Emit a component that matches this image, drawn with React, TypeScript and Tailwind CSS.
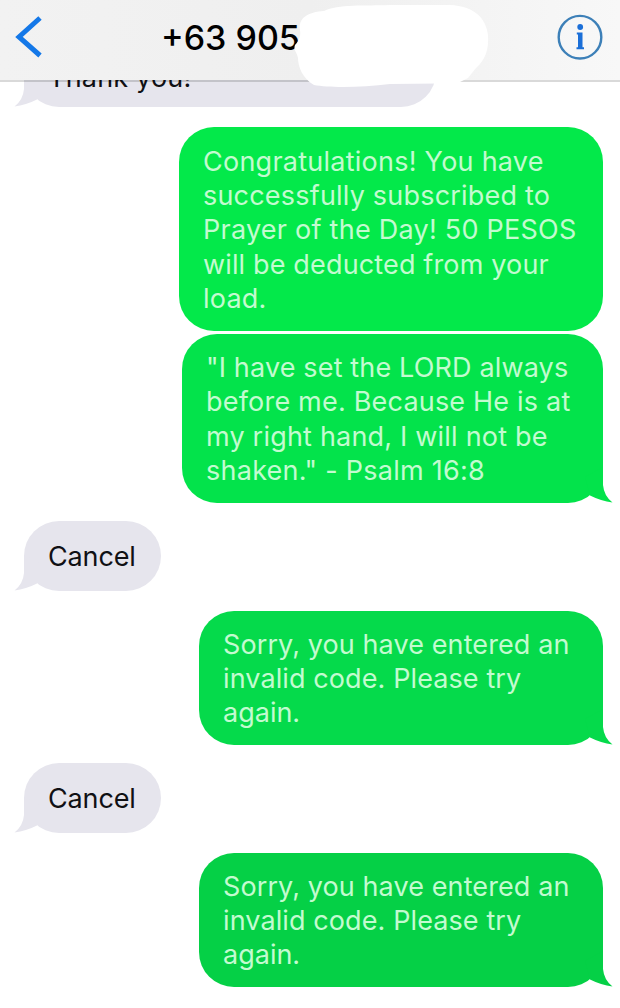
import React from 'react';
import { cx } from 'class-variance-authority';

type Message = {
  side: 'in' | 'out';
  // outer spacing and size of the bubble
  box: string;
  color: string;
  tail: boolean;
  lines: { text: string; tracking: number }[];
};

const messages: Message[] = [
  {
    side: 'in',
    box: '-mt-[46px] ml-6 w-[412px] h-[71px] pl-6 pt-[13px]',
    color: '#e6e5ed',
    tail: true,
    lines: [{ text: 'Thank you!', tracking: 0.2 }],
  },
  {
    side: 'out',
    box: 'mt-5 w-[424px] h-[204px] pl-6 pt-[3px]',
    color: '#03e94a',
    tail: false,
    lines: [
      { text: 'Congratulations! You have', tracking: 0.25 },
      { text: 'successfully subscribed to', tracking: 0.2 },
      { text: 'Prayer of the Day! 50 PESOS', tracking: 0.25 },
      { text: 'will be deducted from your', tracking: 0.15 },
      { text: 'load.', tracking: 0.2 },
    ],
  },
  {
    side: 'out',
    box: 'mt-[3px] w-[421px] h-[169px] pl-6 pt-[2px]',
    color: '#03e34b',
    tail: true,
    lines: [
      { text: '"I have set the LORD always', tracking: 0.15 },
      { text: 'before me. Because He is at', tracking: 0.2 },
      { text: 'my right hand, I will not be', tracking: 0.2 },
      { text: 'shaken." - Psalm 16:8', tracking: 0.25 },
    ],
  },
  {
    side: 'in',
    box: 'mt-[18px] ml-6 w-[137px] h-[70px] pl-6 pt-[3px]',
    color: '#e6e5ed',
    tail: true,
    lines: [{ text: 'Cancel', tracking: -0.15 }],
  },
  {
    side: 'out',
    box: 'mt-5 w-[404px] h-[134px] pl-6 pt-[2px]',
    color: '#05da4b',
    tail: true,
    lines: [
      { text: 'Sorry, you have entered an', tracking: 0.1 },
      { text: 'invalid code. Please try', tracking: 0.1 },
      { text: 'again.', tracking: 0 },
    ],
  },
  {
    side: 'in',
    box: 'mt-[18px] ml-6 w-[137px] h-[70px] pl-6 pt-[3px]',
    color: '#e6e5ed',
    tail: true,
    lines: [{ text: 'Cancel', tracking: -0.15 }],
  },
  {
    side: 'out',
    box: 'mt-5 w-[404px] h-[134px] pl-6 pt-[2px]',
    color: '#05d046',
    tail: true,
    lines: [
      { text: 'Sorry, you have entered an', tracking: 0.1 },
      { text: 'invalid code. Please try', tracking: 0.1 },
      { text: 'again.', tracking: 0 },
    ],
  },
];

export default function App() {
  return (
    <div className="w-[620px] h-[1008px] overflow-hidden bg-white font-['Inter','Liberation_Sans',sans-serif]">
      <Header />
      <main className="flex flex-col pr-[17px]">
        {messages.map((message, i) => (
          <Bubble key={i} message={message} />
        ))}
      </main>
    </div>
  );
}

function Header() {
  return (
    <header className="relative z-10 flex items-center h-[82px] pb-[6px] border-b-2 border-black/15 bg-clip-padding bg-gradient-to-r from-[#f2f2f2] via-[#efefef] to-[#f8f8f8]">
      <svg className="ml-[14px] w-[30px] h-[44px]" viewBox="0 0 30 44" fill="none">
        <path d="M26 3 L5 22 L26 40.500" stroke="#1478e8" strokeWidth="5" />
      </svg>
      <h1 className="ml-[117px] pt-[2px] text-[34px] leading-none font-medium text-black whitespace-nowrap">+63 905</h1>
      <svg className="ml-auto mr-[17px] w-[46px] h-[46px]" viewBox="0 0 46 46" fill="none">
        <circle cx="23" cy="23.200" r="21.3" stroke="#3d80b8" strokeWidth="2.4" />
        <circle cx="23.2" cy="13" r="2.9" fill="#1b6fd8" />
        <path d="M19.8 18.500h5.700V33.300h1.500v2h-7.500v-2h1.500V20.500h-1.200z" fill="#1b6fd8" />
      </svg>
      {/* blanked out part of the number */}
      <svg className="absolute left-[290px] top-0 w-[210px] h-[90px]" viewBox="0 0 210 90">
        <path
          d="M10 30 C8 18 18 12 34 11 C48 4 75 6 100 5 L160 5 C184 6 196 18 198 35 C199 50 195 60 186 68 L178 78 L168 83 L148 83.500 L100 84 C72 87.500 40 88 24 85 C12 78 8 66 8 58 C7 52 3 50 5 45 C9 41 11 36 10 30 Z"
          fill="#fff"
        />
      </svg>
    </header>
  );
}

function Bubble({ message }: { message: Message }) {
  const out = message.side === 'out';
  return (
    <div
      className={cx(
        'relative shrink-0 flex flex-col justify-center rounded-[35px] text-[27px] leading-[34.2px] whitespace-nowrap',
        out ? 'self-end text-[#c3fbd0]' : 'self-start text-[#101014]',
        message.box,
      )}
      style={{ backgroundColor: message.color }}
    >
      {message.lines.map((line) => (
        <span key={line.text} style={{ letterSpacing: line.tracking }}>
          {line.text}
        </span>
      ))}
      {message.tail && <Tail color={message.color} flip={!out} />}
    </div>
  );
}

function Tail({ color, flip }: { color: string; flip: boolean }) {
  return (
    <svg
      className={cx('absolute bottom-0 w-[50px] h-[36px]', flip ? '-left-[12px] -scale-x-100' : '-right-[12px]')}
      viewBox="0 0 50 36"
    >
      <path d="M38 0 V18 Q39 29 47.500 35.500 Q36 34 25 28.500 L20 10 Z" fill={color} />
    </svg>
  );
}
